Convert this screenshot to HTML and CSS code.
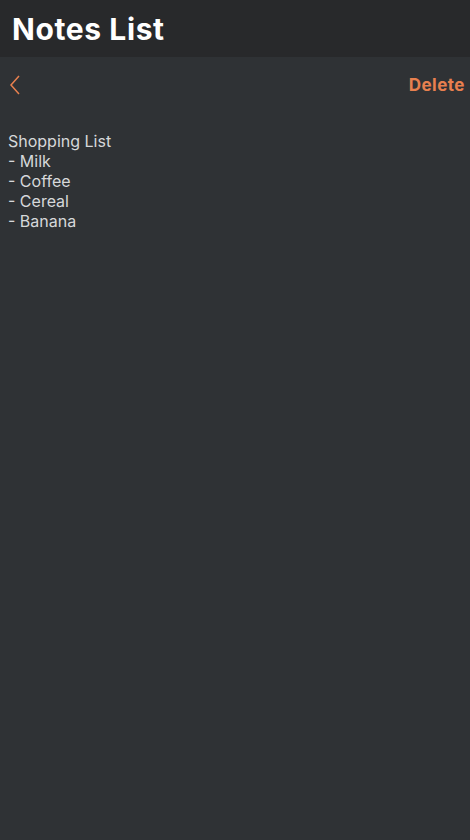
FILE: index.html
```html
<!DOCTYPE html>
<html>
    <head>
        <title>Notes List</title>
        <link rel="stylesheet" href="styles.css">
    </head>
    <body>
        <header class="app-header">
            <h1>Notes List</h1>
        </header>
        <div class="toolbar">
            <button class="back-btn" aria-label="Back">
                <svg width="12" height="20" viewBox="0 0 12 20">
                    <path d="M10 1 L2 10 L10 19" fill="none" stroke="currentColor" stroke-width="1.5" />
                </svg>
            </button>
            <button class="delete-btn">Delete</button>
        </div>
        <div class="note-text">Shopping List
- Milk
- Coffee
- Cereal
- Banana</div>
    </body>
</html>
```

FILE: styles.css
```css
body {
    margin: 0;
    height: 840px;
    background-color: #2f3235;
    font-family: Inter, "Noto Sans", sans-serif;
}

.app-header {
    height: 57px;
    background-color: #28292b;
    display: flex;
    align-items: center;
    padding: 0 12px;
}

.app-header h1 {
    margin: 0;
    color: #ffffff;
    font-size: 30px;
    font-weight: 700;
    letter-spacing: 0.6px;
}

.toolbar {
    display: flex;
    justify-content: space-between;
    align-items: center;
    padding: 14px 5px 0 9px;
    height: 28px;
}

.back-btn,
.delete-btn {
    background: none;
    border: none;
    padding: 0;
    color: #e8804f;
    cursor: pointer;
}

.back-btn svg {
    display: block;
}

.delete-btn {
    font-family: inherit;
    font-size: 17px;
    font-weight: 700;
    letter-spacing: 0.5px;
}

.note-text {
    white-space: pre-line;
    margin-top: 32px;
    padding: 0 8px;
    color: #d6d8da;
    font-size: 16px;
    line-height: 20px;
}
```
